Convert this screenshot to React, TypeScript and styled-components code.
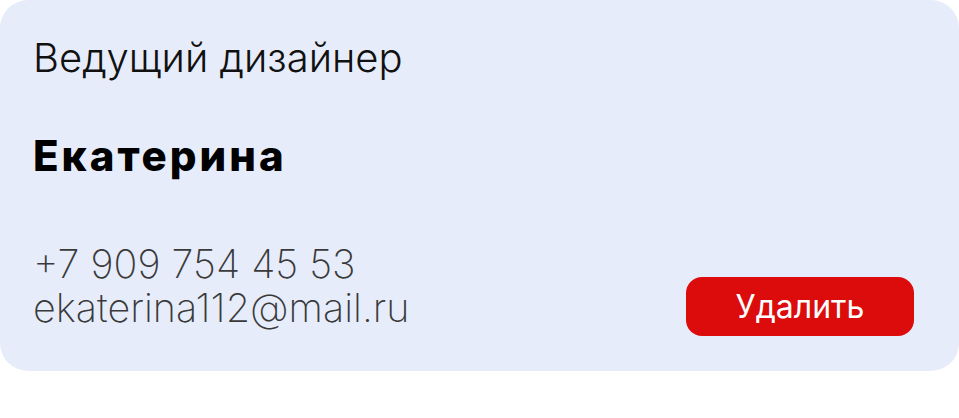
import React from "react";
import styled, { createGlobalStyle } from "styled-components";

const Global = createGlobalStyle`
  html, body { margin: 0; padding: 0; background: #ffffff; }
  body { font-family: Inter, "Noto Sans", sans-serif; }
`;

const Card = styled.div`
  width: 959px;
  height: 371px;
  box-sizing: border-box;
  background: #e7ecfa;
  border-radius: 28px;
  padding: 34px 45px 35px 33px;
  display: flex;
  flex-direction: column;
`;

const Position = styled.div`
  font-size: 40px;
  font-weight: 300;
  line-height: 48px;
  color: #111111;
`;

const Name = styled.div`
  margin-top: 50px;
  font-size: 42px;
  font-weight: 800;
  letter-spacing: 3px;
  line-height: 48px;
  color: #000000;
`;

const Footer = styled.div`
  margin-top: auto;
  display: flex;
  justify-content: space-between;
  align-items: flex-end;
`;

const Contacts = styled.div`
  display: flex;
  flex-direction: column;
  margin-bottom: 6px;
`;

const ContactLine = styled.div`
  font-size: 39.5px;
  font-weight: 200;
  line-height: 44px;
  color: #3a3a3a;
`;

const DeleteButton = styled.button`
  width: 228px;
  height: 59px;
  border: none;
  border-radius: 16px;
  background: #dc0c0c;
  color: #ffffff;
  font-family: Inter, "Noto Sans", sans-serif;
  font-size: 32px;
  font-weight: 400;
  cursor: pointer;
  padding: 0;
`;

export default function App() {
  return (
    <>
      <Global />
      <Card>
        <Position>Ведущий дизайнер</Position>
        <Name>Екатерина</Name>
        <Footer>
          <Contacts>
            <ContactLine>+7 909 754 45 53</ContactLine>
            <ContactLine>ekaterina112@mail.ru</ContactLine>
          </Contacts>
          <DeleteButton>Удалить</DeleteButton>
        </Footer>
      </Card>
    </>
  );
}
